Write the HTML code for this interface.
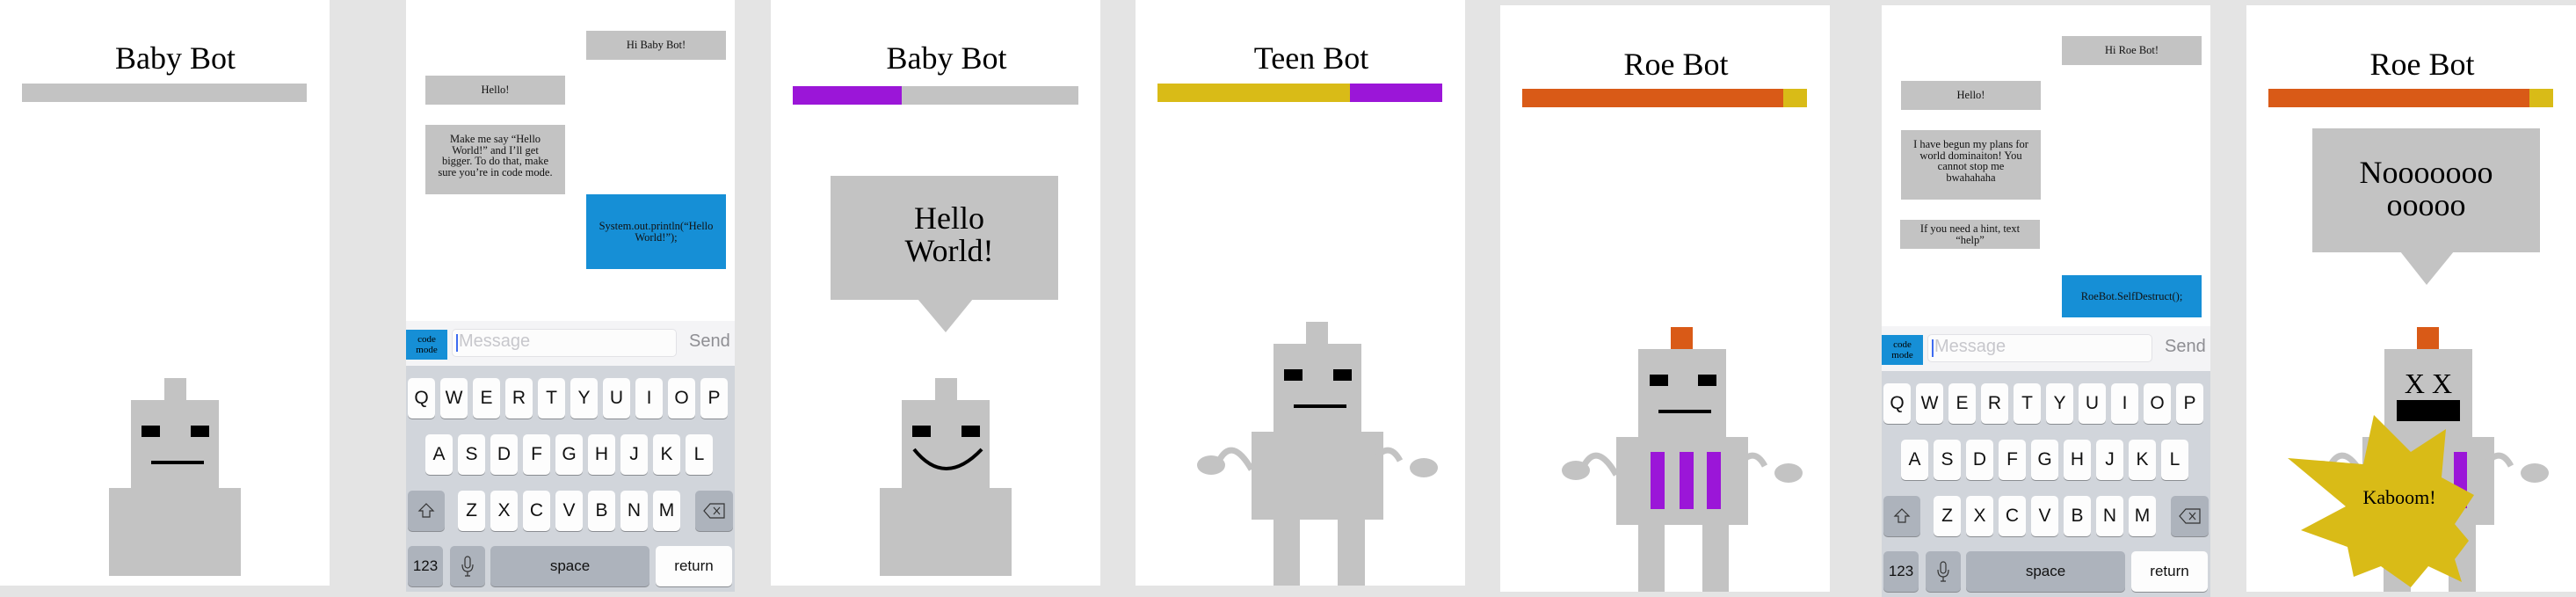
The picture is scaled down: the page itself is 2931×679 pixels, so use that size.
<!DOCTYPE html>
<html><head><meta charset="utf-8"><style>
*{margin:0;padding:0;box-sizing:border-box}
body{width:2931px;height:673px;background:#e4e4e4;position:relative;overflow:hidden;font-family:"Liberation Serif",serif}
.a{position:absolute}
.w{background:#fff}
.g{background:#c3c3c3}
.k{background:#000}
.t{position:absolute;font-size:36px;text-align:center;color:#000;line-height:1}
.ph{position:absolute;width:374px;height:673px;background:#fff;overflow:hidden}
.m{position:absolute;background:#c3c3c3;font-size:12.5px;line-height:12.5px;text-align:center;color:#111;display:flex;align-items:center;justify-content:center;padding:0 14px}
.mt{align-items:flex-start;padding-top:10px}
.bl{background:#168fd6}
.kb{position:absolute;left:0;top:416px;width:374px;height:260px;background:#d1d5db}
.ib{position:absolute;left:0;top:365px;width:374px;height:51px;background:#f4f4f6}
.key{position:absolute;width:31px;height:46px;background:#fdfdfd;border-radius:5px;box-shadow:0 1px 0 #8a8d92;font-family:"Liberation Sans",sans-serif;font-size:21px;color:#111;display:flex;align-items:center;justify-content:center}
.sp{background:#adb3bc}
</style></head><body>

<!-- Panel 1 -->
<div class="a w" style="left:0;top:0;width:375px;height:666px"></div>
<div class="t" style="left:0;width:375px;top:48px;padding-left:24px">Baby Bot</div>
<div class="a g" style="left:25px;top:95px;width:324px;height:21px"></div>
<div class="a g" style="left:187px;top:430px;width:25px;height:26px"></div>
<div class="a g" style="left:149px;top:455px;width:100px;height:101px"></div>
<div class="a k" style="left:161px;top:484px;width:21px;height:13px"></div>
<div class="a k" style="left:217px;top:484px;width:21px;height:13px"></div>
<div class="a k" style="left:172px;top:524px;width:60px;height:4px"></div>
<div class="a g" style="left:124px;top:555px;width:150px;height:100px"></div>

<!-- Phone A -->
<div class="ph" style="left:462px;top:0">
 <div class="m" style="left:205px;top:35px;width:159px;height:33px">Hi Baby Bot!</div>
 <div class="m" style="left:22px;top:86px;width:159px;height:33px">Hello!</div>
 <div class="m mt" style="left:22px;top:142px;width:159px;height:79px">Make me say “Hello World!” and I’ll get bigger. To do that, make sure you’re in code mode.</div>
 <div class="m bl" style="left:205px;top:221px;width:159px;height:85px">System.out.println(“Hello World!”);</div>
 <div class="ib"></div>
 <div class="a bl" style="left:0;top:375px;width:47px;height:34px;font-size:11px;line-height:12px;text-align:center;padding-top:5px">code<br>mode</div>
 <div class="a" style="left:52px;top:374px;width:256px;height:32px;background:#fcfcfc;border:1px solid #e2e2e6;border-radius:5px"></div>
 <div class="a" style="left:57px;top:380px;width:2px;height:20px;background:#3d6bf0"></div>
 <div class="a" style="left:60px;top:377px;font-family:'Liberation Sans',sans-serif;font-size:20px;color:#c7c7cc">Message</div>
 <div class="a" style="left:322px;top:377px;font-family:'Liberation Sans',sans-serif;font-size:20px;color:#8e8e93">Send</div>
 <div class="kb"></div>
 <div class="key" style="left:2px;top:430px">Q</div><div class="key" style="left:39px;top:430px">W</div><div class="key" style="left:76px;top:430px">E</div><div class="key" style="left:113px;top:430px">R</div><div class="key" style="left:150px;top:430px">T</div><div class="key" style="left:187px;top:430px">Y</div><div class="key" style="left:224px;top:430px">U</div><div class="key" style="left:261px;top:430px">I</div><div class="key" style="left:298px;top:430px">O</div><div class="key" style="left:335px;top:430px">P</div>
 <div class="key" style="left:22px;top:494px">A</div><div class="key" style="left:59px;top:494px">S</div><div class="key" style="left:96px;top:494px">D</div><div class="key" style="left:133px;top:494px">F</div><div class="key" style="left:170px;top:494px">G</div><div class="key" style="left:207px;top:494px">H</div><div class="key" style="left:244px;top:494px">J</div><div class="key" style="left:281px;top:494px">K</div><div class="key" style="left:318px;top:494px">L</div>
 <div class="key sp" style="left:2px;top:558px;width:42px"><svg width="20" height="20" viewBox="0 0 20 20"><path d="M10 2 L18 10 L14 10 L14 17 L6 17 L6 10 L2 10 Z" fill="none" stroke="#333" stroke-width="1.2"/></svg></div>
 <div class="key" style="left:59px;top:558px">Z</div><div class="key" style="left:96px;top:558px">X</div><div class="key" style="left:133px;top:558px">C</div><div class="key" style="left:170px;top:558px">V</div><div class="key" style="left:207px;top:558px">B</div><div class="key" style="left:244px;top:558px">N</div><div class="key" style="left:281px;top:558px">M</div>
 <div class="key sp" style="left:329px;top:558px;width:43px"><svg width="26" height="18" viewBox="0 0 26 18"><path d="M8 1 H24 V17 H8 L1 9 Z M12 5 L19 13 M19 5 L12 13" fill="none" stroke="#333" stroke-width="1.2"/></svg></div>
 <div class="key sp" style="left:2px;top:621px;width:40px;font-size:17px">123</div>
 <div class="key sp" style="left:50px;top:621px;width:40px"><svg width="14" height="24" viewBox="0 0 14 24"><rect x="4" y="1" width="6" height="13" rx="3" fill="none" stroke="#333" stroke-width="1.2"/><path d="M1 10 Q1 18 7 18 Q13 18 13 10 M7 18 V23 M4 23 H10" fill="none" stroke="#333" stroke-width="1.2"/></svg></div>
 <div class="key sp" style="left:96px;top:621px;width:181px;font-size:17px">space</div>
 <div class="key" style="left:284px;top:621px;width:87px;font-size:17px">return</div>
</div>

<!-- Panel 3 -->
<div class="a w" style="left:877px;top:0;width:375px;height:666px"></div>
<div class="t" style="left:877px;width:400px;top:48px">Baby Bot</div>
<div class="a g" style="left:1026px;top:98px;width:201px;height:21px"></div>
<div class="a" style="left:902px;top:98px;width:124px;height:21px;background:#9b16d8"></div>
<div class="a g" style="left:945px;top:200px;width:259px;height:141px"></div>
<svg class="a" style="left:1040px;top:340px" width="72" height="40"><path d="M4 0 L67 0 L36 38 Z" fill="#c3c3c3"/></svg>
<div class="t" style="left:945px;width:270px;top:230px;line-height:37px">Hello<br>World!</div>
<div class="a g" style="left:1064px;top:430px;width:25px;height:26px"></div>
<div class="a g" style="left:1026px;top:455px;width:100px;height:101px"></div>
<div class="a k" style="left:1038px;top:484px;width:21px;height:13px"></div>
<div class="a k" style="left:1094px;top:484px;width:21px;height:13px"></div>
<svg class="a" style="left:1035px;top:505px" width="90" height="35"><path d="M5 6 Q40 50 82 6" fill="none" stroke="#000" stroke-width="4"/></svg>
<div class="a g" style="left:1001px;top:555px;width:150px;height:100px"></div>

<!-- Panel 4 Teen -->
<div class="a w" style="left:1292px;top:0;width:375px;height:666px"></div>
<div class="t" style="left:1292px;width:400px;top:48px">Teen Bot</div>
<div class="a" style="left:1317px;top:95px;width:219px;height:21px;background:#d9bb17"></div>
<div class="a" style="left:1536px;top:95px;width:105px;height:21px;background:#9b16d8"></div>
<div class="a g" style="left:1486px;top:366px;width:25px;height:26px"></div>
<div class="a g" style="left:1449px;top:391px;width:100px;height:101px"></div>
<div class="a k" style="left:1461px;top:420px;width:21px;height:13px"></div>
<div class="a k" style="left:1517px;top:420px;width:21px;height:13px"></div>
<div class="a k" style="left:1472px;top:460px;width:60px;height:4px"></div>
<div class="a g" style="left:1424px;top:491px;width:150px;height:100px"></div>
<div class="a g" style="left:1449px;top:590px;width:30px;height:76px"></div>
<div class="a g" style="left:1522px;top:590px;width:31px;height:76px"></div>
<svg class="a" style="left:1360px;top:500px" width="280" height="50"><path d="M27 24 Q42 -4 64 34" fill="none" stroke="#c3c3c3" stroke-width="7"/><ellipse cx="18" cy="29" rx="16" ry="11" fill="#c3c3c3"/><path d="M233 24 Q218 -4 196 34" fill="none" stroke="#c3c3c3" stroke-width="7"/><ellipse cx="260" cy="32" rx="16" ry="11" fill="#c3c3c3"/></svg>

<!-- Panel 5 Roe -->
<div class="a w" style="left:1707px;top:6px;width:375px;height:667px"></div>
<div class="t" style="left:1707px;width:400px;top:55px">Roe Bot</div>
<div class="a" style="left:1732px;top:101px;width:297px;height:21px;background:#d95a17"></div>
<div class="a" style="left:2029px;top:101px;width:27px;height:21px;background:#d9bb17"></div>
<div class="a" style="left:1901px;top:372px;width:25px;height:26px;background:#d95a17"></div>
<div class="a g" style="left:1864px;top:397px;width:100px;height:101px"></div>
<div class="a k" style="left:1877px;top:426px;width:21px;height:13px"></div>
<div class="a k" style="left:1932px;top:426px;width:21px;height:13px"></div>
<div class="a k" style="left:1887px;top:466px;width:60px;height:4px"></div>
<div class="a g" style="left:1839px;top:497px;width:150px;height:100px"></div>
<div class="a" style="left:1878px;top:514px;width:16px;height:65px;background:#9b16d8"></div>
<div class="a" style="left:1911px;top:514px;width:16px;height:65px;background:#9b16d8"></div>
<div class="a" style="left:1942px;top:514px;width:16px;height:65px;background:#9b16d8"></div>
<div class="a g" style="left:1864px;top:596px;width:30px;height:77px"></div>
<div class="a g" style="left:1937px;top:596px;width:30px;height:77px"></div>
<svg class="a" style="left:1775px;top:506px" width="280" height="50"><path d="M27 24 Q42 -4 64 34" fill="none" stroke="#c3c3c3" stroke-width="7"/><ellipse cx="18" cy="29" rx="16" ry="11" fill="#c3c3c3"/><path d="M233 24 Q218 -4 196 34" fill="none" stroke="#c3c3c3" stroke-width="7"/><ellipse cx="260" cy="32" rx="16" ry="11" fill="#c3c3c3"/></svg>

<!-- Phone B -->
<div class="ph" style="left:2141px;top:6px">
 <div class="m" style="left:205px;top:35px;width:159px;height:33px">Hi Roe Bot!</div>
 <div class="m" style="left:22px;top:86px;width:159px;height:33px">Hello!</div>
 <div class="m mt" style="left:22px;top:142px;width:159px;height:79px">I have begun my plans for world dominaiton! You cannot stop me bwahahaha</div>
 <div class="m" style="left:21px;top:244px;width:159px;height:33px">If you need a hint, text “help”</div>
 <div class="m bl" style="left:205px;top:307px;width:159px;height:48px">RoeBot.SelfDestruct();</div>
 <div class="ib"></div>
 <div class="a bl" style="left:0;top:375px;width:47px;height:34px;font-size:11px;line-height:12px;text-align:center;padding-top:5px">code<br>mode</div>
 <div class="a" style="left:52px;top:374px;width:256px;height:32px;background:#fcfcfc;border:1px solid #e2e2e6;border-radius:5px"></div>
 <div class="a" style="left:57px;top:380px;width:2px;height:20px;background:#3d6bf0"></div>
 <div class="a" style="left:60px;top:377px;font-family:'Liberation Sans',sans-serif;font-size:20px;color:#c7c7cc">Message</div>
 <div class="a" style="left:322px;top:377px;font-family:'Liberation Sans',sans-serif;font-size:20px;color:#8e8e93">Send</div>
 <div class="kb"></div>
 <div class="key" style="left:2px;top:430px">Q</div><div class="key" style="left:39px;top:430px">W</div><div class="key" style="left:76px;top:430px">E</div><div class="key" style="left:113px;top:430px">R</div><div class="key" style="left:150px;top:430px">T</div><div class="key" style="left:187px;top:430px">Y</div><div class="key" style="left:224px;top:430px">U</div><div class="key" style="left:261px;top:430px">I</div><div class="key" style="left:298px;top:430px">O</div><div class="key" style="left:335px;top:430px">P</div>
 <div class="key" style="left:22px;top:494px">A</div><div class="key" style="left:59px;top:494px">S</div><div class="key" style="left:96px;top:494px">D</div><div class="key" style="left:133px;top:494px">F</div><div class="key" style="left:170px;top:494px">G</div><div class="key" style="left:207px;top:494px">H</div><div class="key" style="left:244px;top:494px">J</div><div class="key" style="left:281px;top:494px">K</div><div class="key" style="left:318px;top:494px">L</div>
 <div class="key sp" style="left:2px;top:558px;width:42px"><svg width="20" height="20" viewBox="0 0 20 20"><path d="M10 2 L18 10 L14 10 L14 17 L6 17 L6 10 L2 10 Z" fill="none" stroke="#333" stroke-width="1.2"/></svg></div>
 <div class="key" style="left:59px;top:558px">Z</div><div class="key" style="left:96px;top:558px">X</div><div class="key" style="left:133px;top:558px">C</div><div class="key" style="left:170px;top:558px">V</div><div class="key" style="left:207px;top:558px">B</div><div class="key" style="left:244px;top:558px">N</div><div class="key" style="left:281px;top:558px">M</div>
 <div class="key sp" style="left:329px;top:558px;width:43px"><svg width="26" height="18" viewBox="0 0 26 18"><path d="M8 1 H24 V17 H8 L1 9 Z M12 5 L19 13 M19 5 L12 13" fill="none" stroke="#333" stroke-width="1.2"/></svg></div>
 <div class="key sp" style="left:2px;top:621px;width:40px;font-size:17px">123</div>
 <div class="key sp" style="left:50px;top:621px;width:40px"><svg width="14" height="24" viewBox="0 0 14 24"><rect x="4" y="1" width="6" height="13" rx="3" fill="none" stroke="#333" stroke-width="1.2"/><path d="M1 10 Q1 18 7 18 Q13 18 13 10 M7 18 V23 M4 23 H10" fill="none" stroke="#333" stroke-width="1.2"/></svg></div>
 <div class="key sp" style="left:96px;top:621px;width:181px;font-size:17px">space</div>
 <div class="key" style="left:284px;top:621px;width:87px;font-size:17px">return</div>
</div>

<!-- Panel 7 -->
<div class="a w" style="left:2556px;top:6px;width:375px;height:667px"></div>
<div class="t" style="left:2556px;width:400px;top:55px">Roe Bot</div>
<div class="a" style="left:2581px;top:101px;width:297px;height:21px;background:#d95a17"></div>
<div class="a" style="left:2878px;top:101px;width:27px;height:21px;background:#d9bb17"></div>
<div class="a g" style="left:2631px;top:146px;width:259px;height:141px"></div>
<svg class="a" style="left:2729px;top:286px" width="66" height="40"><path d="M2 0 L63 0 L32 38 Z" fill="#c3c3c3"/></svg>
<div class="t" style="left:2631px;width:259px;top:178px;line-height:37px">Nooooooo<br>ooooo</div>
<div class="a" style="left:2750px;top:372px;width:25px;height:26px;background:#d95a17"></div>
<div class="a g" style="left:2713px;top:397px;width:100px;height:101px"></div>
<div class="a g" style="left:2688px;top:497px;width:150px;height:100px"></div>
<div class="a" style="left:2792px;top:514px;width:15px;height:64px;background:#9b16d8"></div>
<div class="a g" style="left:2712px;top:596px;width:31px;height:77px"></div>
<div class="a g" style="left:2786px;top:596px;width:31px;height:77px"></div>
<svg class="a" style="left:2624px;top:506px" width="280" height="50"><path d="M27 24 Q42 -4 64 34" fill="none" stroke="#c3c3c3" stroke-width="7"/><ellipse cx="18" cy="29" rx="16" ry="11" fill="#c3c3c3"/><path d="M233 24 Q218 -4 196 34" fill="none" stroke="#c3c3c3" stroke-width="7"/><ellipse cx="260" cy="32" rx="16" ry="11" fill="#c3c3c3"/></svg>
<div class="t" style="left:2713px;width:100px;top:420px;font-size:32px">X X</div>
<div class="a k" style="left:2727px;top:455px;width:72px;height:24px"></div>
<svg class="a" style="left:0;top:0" width="2931" height="673"><polygon points="2701,472 2743,514 2783,488 2778,543 2815,563 2793,596 2809,615 2793,636 2801,662 2763,644 2743,668 2709,644 2678,656 2671,622 2618,603 2669,576 2603,521 2689,528" fill="#d9bb17"/></svg>
<div class="t" style="left:2680px;width:100px;top:555px;font-size:22px">Kaboom!</div>
</body></html>
